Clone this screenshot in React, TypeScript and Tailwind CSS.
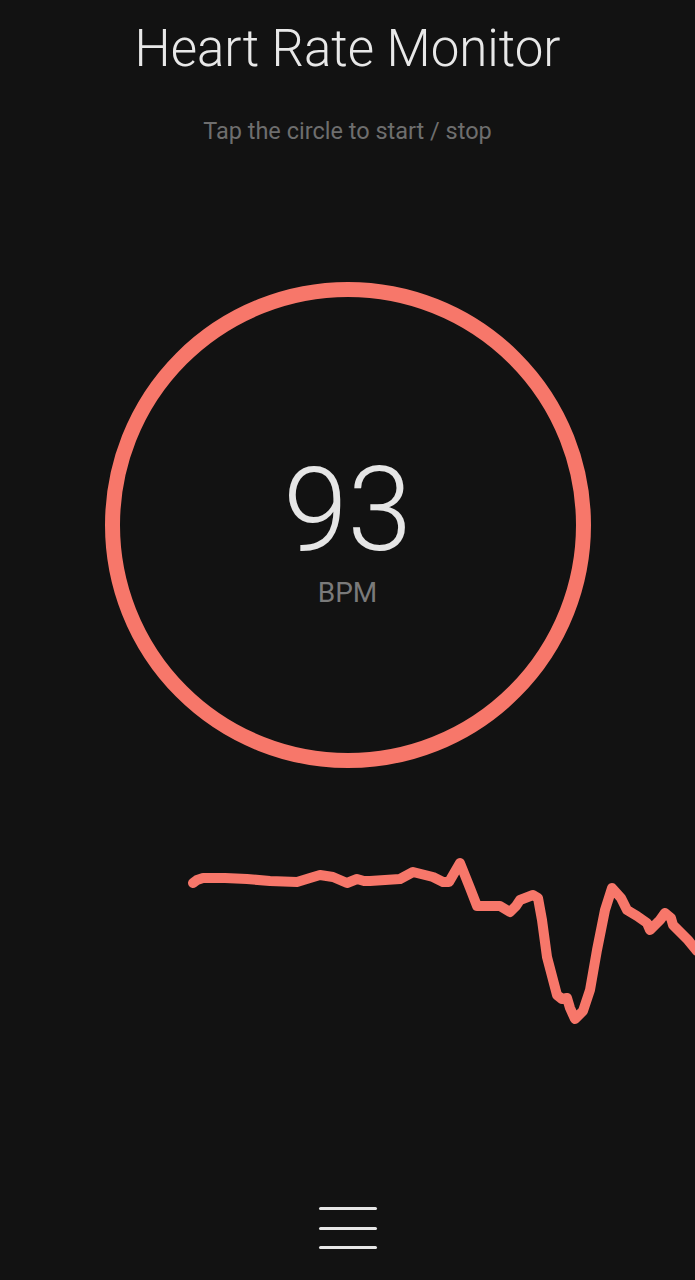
import React from "react";

const pts: [number, number][] = [
  [193, 883], [197, 880], [203, 878], [225, 878], [247, 879], [270, 881], [297, 882], [310, 878], [320, 875], [333, 877], [347, 883],
  [357, 879], [364, 881], [370, 881], [385, 880], [400, 879], [413, 872], [425, 875], [433, 877], [443, 882], [449, 882], [460, 863],
  [470, 888], [477, 906], [500, 906], [510, 912], [516, 906], [520, 900], [533, 895], [538, 898], [542, 920], [547, 957],
  [557, 995], [562, 999], [567, 998], [570, 1008], [575, 1019], [583, 1011], [590, 990], [597, 950], [605, 910], [612, 888], [621, 898], [623, 902],
  [627, 910], [637, 916], [647, 923], [650, 930], [660, 920], [665, 913], [671, 918], [673, 925], [680, 932], [688, 940], [697, 951],
];

const Y0 = 840;
const d = pts.map((p, i) => `${i === 0 ? "M" : "L"}${p[0]} ${p[1] - Y0}`).join(" ");

export default function App() {
  return (
    <div
      className="min-h-screen w-full bg-[#121212] flex flex-col items-center overflow-hidden"
      style={{ fontFamily: "Roboto, 'Noto Sans', sans-serif" }}
    >
      <h1 className="mt-[23px] text-[51px] leading-none font-light text-[#e8e8e8]">
        Heart Rate Monitor
      </h1>
      <p className="mt-[45px] text-[23.5px] leading-[24px] text-[#6e6e6e]">Tap the circle to start / stop</p>
      <button className="mt-[139px] w-[486px] h-[486px] rounded-full border-[15px] border-[#f7776a] flex flex-col items-center justify-center pt-[9px] shrink-0">
        <span className="text-[116px] leading-none font-light text-[#e6e6e6]">93</span>
        <span className="mt-[11px] text-[28px] leading-none text-[#7a7a7a]">BPM</span>
      </button>
      <svg width="695" height="200" viewBox="0 0 695 200" className="mt-[72px] shrink-0 block">
        <path d={d} fill="none" stroke="#f7776a" strokeWidth="10" strokeLinecap="round" strokeLinejoin="round" />
      </svg>
      <button className="mt-[167px] flex flex-col gap-[16.5px] w-[58px]">
        <span className="block h-[3px] w-full rounded-full bg-[#e6e6e6]" />
        <span className="block h-[3px] w-full rounded-full bg-[#e6e6e6]" />
        <span className="block h-[3px] w-full rounded-full bg-[#e6e6e6]" />
      </button>
    </div>
  );
}
